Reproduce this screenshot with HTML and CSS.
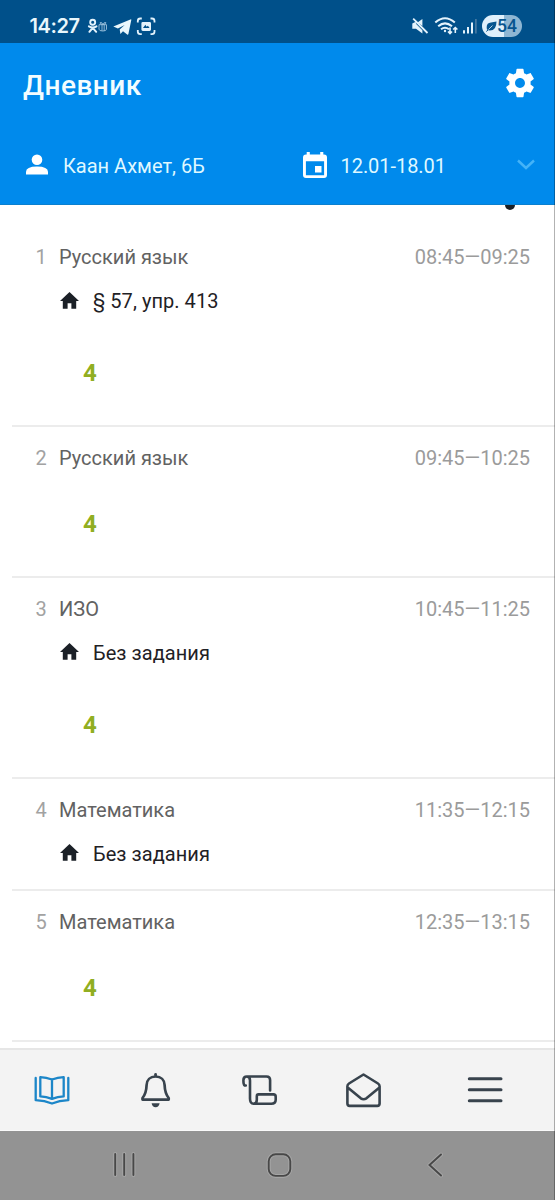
FILE: index.html
```html
<!DOCTYPE html>
<html lang="ru">
<head>
<meta charset="utf-8">
<title>Дневник</title>
<link rel="stylesheet" href="styles.css">
</head>
<body>
<div class="screen">
  <div class="status">
    <span class="clock">14:27</span>
    <svg class="notif" width="70" height="20" viewBox="87 16 70 20" fill="none" stroke="#e4f3fc">
      <circle cx="92.700" cy="22.200" r="2.500" stroke-width="1.900"/>
      <path d="M88.900 26.300q3.900 2.300 7.600 0M92.700 27.800l-3.300 4M92.700 27.800l3.500 4" stroke-width="2" stroke-linecap="round"/>
      <path d="M99 24.700h7.500v4.500q0 1.800-3.700 1.800t-3.800-1.800zM102 24.500v6.500M104.200 24.500v6.500M102.800 24.500q-3.500-.5-2.600-2 1.500-.8 2.800 2 1.300-2.800 2.800-2 .9 1.500-3 2" stroke-width=".9" stroke="#9bc1dc"/>
      <path d="M113.300 26.500 131 19.300q.4 0 .3.600l-2.900 14.200q-.4.900-1.200.4l-4.200-3.200-2.600 2.600-.7-4.300 5-4.700-6.800 3.700z" fill="#e9f7fc" stroke="none"/>
      <path d="M141.800 18.500h-1.500q-2.500 0-2.500 2.500v1.500M150.500 18.500h1.500q2.500 0 2.500 2.500v1.500M137.800 30v1.500q0 2.700 2.500 2.700h1.500M154.500 30v1.500q0 2.700-2.500 2.700h-1.500" stroke-width="1.800"/>
      <path fill-rule="evenodd" d="M142.800 21.900h6.800q1.400 0 1.400 1.400v6.200q0 1.400-1.400 1.400h-6.800q-1.400 0-1.400-1.400v-6.200q0-1.400 1.400-1.400zM143 28h6.600l-1.700-2.200-1.300 1-1.200-2z" fill="#e4f3fc" stroke="none"/>
    </svg>
    <svg class="signals" width="68" height="22" viewBox="410 15 68 22" fill="none" stroke="#e4f3fc">
      <path d="M412.300 23.600h3.800l6.300-4.600v6.900l-5.300-4-2.300.4zM412.300 23.600v5.200h3.700l6.400 4.700v-3.200l-6.700-6.700z" fill="#e4f3fc" stroke="none"/>
      <path d="M413.200 18.700 427.500 33" stroke-width="1.800"/>
      <path d="M435.300 22.600q9.700-8.700 19.500 0M438.200 26.300q6.800-5.900 13.800 0M441 29.300q4-3.200 8 0" stroke-width="2"/>
      <circle cx="445" cy="31" r="1.200" fill="#e4f3fc" stroke="none"/>
      <path d="M450 27.600v6M448 31.500l2 2 2-2M455.300 33v-5M453.200 29.500l2.100-2 2.100 2" stroke-width="1.600"/>
      <path d="M464 33.500v-3.300M468 33.500v-6.500M472 33.500v-11" stroke-width="2"/><path d="M475.900 33.500V19" stroke="#4f7fa5" stroke-width="1.500"/>
    </svg>
    <div class="battery">
      <svg width="11" height="11" viewBox="0 0 11 11"><path d="M1 8.500Q-.5 2 5 1.500L10.500.5Q10.500 9.500 4 9.600q-2 0-3-1.100z" fill="#07558f"/><path d="M2.500 8.500 6.500 4.500" stroke="#e0f0fb" stroke-width=".8"/><path d="M.3 10.500 2 9" stroke="#07558f"/></svg>
      <span>54</span>
    </div>
  </div>
  <header class="header">
    <div class="title-row">
      <h1>Дневник</h1>
      <svg class="gear" width="34" height="34" viewBox="0 0 24 24" fill="#fff"><path d="M19.430 12.980c.04-.32.07-.64.07-.98s-.03-.66-.07-.98l2.110-1.650c.19-.15.24-.42.12-.64l-2-3.460c-.12-.22-.39-.3-.61-.22l-2.490 1c-.52-.4-1.080-.73-1.690-.98l-.38-2.650C14.460 2.180 14.250 2 14 2h-4c-.25 0-.46.18-.49.42l-.38 2.650c-.61.25-1.170.59-1.690.98l-2.490-1c-.23-.09-.49 0-.61.22l-2 3.460c-.13.22-.07.49.12.64l2.110 1.650c-.04.32-.07.65-.07.98s.03.66.07.98l-2.110 1.650c-.19.15-.24.42-.12.64l2 3.460c.12.22.39.3.61.22l2.490-1c.52.4 1.080.73 1.690.98l.38 2.650c.03.24.24.42.49.42h4c.25 0 .46-.18.49-.42l.38-2.650c.61-.25 1.170-.59 1.690-.98l2.490 1c.23.09.49 0 .61-.22l2-3.460c.12-.22.07-.49-.12-.64l-2.110-1.650zM12 15.500c-1.930 0-3.500-1.570-3.500-3.500s1.570-3.500 3.500-3.500 3.500 1.570 3.500 3.500-1.570 3.500-3.500 3.500z"/></svg>
    </div>
    <div class="filters">
      <svg class="person" width="22" height="22" viewBox="0 0 22 22" fill="#fff"><circle cx="11" cy="5.700" r="5.300"/><path d="M0 20.500v-2.500q0-5.500 11-5.500t11 5.500v2.500z"/></svg>
      <span class="pupil">Каан Ахмет, 6Б</span>
      <svg class="calendar" width="24" height="27" viewBox="0 0 24 27"><path fill="#fff" fill-rule="evenodd" d="M3.700 0h3.100v2.500h10.400V0h3.100v2.500H21q3 0 3 3V23q0 3-3 3H3q-3 0-3-3V5.500q0-3 3-3h.7zM2.900 9.300V23.200h18.200V9.300z"/><path fill="#fff" d="M12 14h6.500v6.500H12z"/></svg>
      <span class="dates">12.01-18.01</span>
      <svg class="chevron" width="18" height="12" viewBox="0 0 18 12" fill="none" stroke="#44b3f8" stroke-width="2.400"><path d="m1 1.500 8 7.500 8-7.500"/></svg>
    </div>
  </header>
  <main class="lessons">
    <div class="day"><i class="day-dot"></i></div>
    <section class="lesson full">
      <div class="line"><span class="num">1</span><span class="subject">Русский язык</span><time>08:45—09:25</time></div>
      <div class="task"><svg width="20" height="18" viewBox="0 0 20 18"><path d="M10.500 0 1 8.900h2.800v7.900h4.800v-5.600h3.800v5.600h4.800V8.900H20z" fill="#1b2027"/></svg><span>§ 57, упр. 413</span></div>
      <div class="grade">4</div>
    </section>
    <section class="lesson graded">
      <div class="line"><span class="num">2</span><span class="subject">Русский язык</span><time>09:45—10:25</time></div>
      <div class="grade">4</div>
    </section>
    <section class="lesson full">
      <div class="line"><span class="num">3</span><span class="subject">ИЗО</span><time>10:45—11:25</time></div>
      <div class="task"><svg width="20" height="18" viewBox="0 0 20 18"><path d="M10.500 0 1 8.900h2.800v7.900h4.800v-5.600h3.800v5.600h4.800V8.900H20z" fill="#1b2027"/></svg><span>Без задания</span></div>
      <div class="grade">4</div>
    </section>
    <section class="lesson brief">
      <div class="line"><span class="num">4</span><span class="subject">Математика</span><time>11:35—12:15</time></div>
      <div class="task"><svg width="20" height="18" viewBox="0 0 20 18"><path d="M10.500 0 1 8.900h2.800v7.900h4.800v-5.600h3.800v5.600h4.800V8.900H20z" fill="#1b2027"/></svg><span>Без задания</span></div>
    </section>
    <section class="lesson graded">
      <div class="line"><span class="num">5</span><span class="subject">Математика</span><time>12:35—13:15</time></div>
      <div class="grade">4</div>
    </section>
  </main>
  <nav class="tabs">
    <svg width="104" height="36" viewBox="0 1072 104 36" fill="none" stroke="#1c86c8" stroke-width="2.300" stroke-linecap="round" stroke-linejoin="round"><path d="M40.300 1077.200q6 .3 11.700 2.300 5.700-2 11.700-2.300v19.200q-6 .4-11.700 2.400-5.700-2-11.700-2.400zM52 1079.500v19M35.700 1078v22.200q9 .5 16.300 3.300 7.300-2.800 16.300-3.300V1078"/></svg>
    <svg width="104" height="36" viewBox="104 1072 104 36" fill="none" stroke="#38434d" stroke-width="2.700" stroke-linecap="round" stroke-linejoin="round"><path d="M155.600 1076.500c-5.500 0-8.800 3.500-9 8.500-.2 6-.8 9-4.100 13v1.600h26.200V1098c-3.300-4-3.900-7-4.100-13-.2-5-3.500-8.500-9-8.500z"/><path d="M155.600 1074.300v1.500"/><path d="M151.600 1103.300h8q-.8 3.900-4 3.900t-4-3.900z" fill="#38434d" stroke="none"/></svg>
    <svg width="104" height="36" viewBox="208 1072 104 36" fill="none" stroke="#38434d" stroke-width="2.600" stroke-linecap="round" stroke-linejoin="round"><path d="M245.800 1085.500h-1.200q-1.200-.8-1.200-5.200 0-3.800 3.400-3.800h19.700q3.600 0 3.600 3.600v10.300M246.800 1076.500q3.200 0 3.200 4v18q0 5.200 3.500 5.200h17.700q4.500 0 4.500-4v-3q0-2.300-2.300-2.300h-14.900q-1.700 0-1.700 2v3.400q0 3.900-3.300 3.900"/></svg>
    <svg width="104" height="36" viewBox="312 1072 104 36" fill="none" stroke="#38434d" stroke-width="2.600" stroke-linecap="round" stroke-linejoin="round"><path d="m363.500 1074.500 14.500 9q1.600 1 1.600 2.800v17.300q0 2.300-2.300 2.300h-27.600q-2.300 0-2.300-2.300v-17.300q0-1.800 1.600-2.800zM348.300 1088l12.500 10.300q2.800 1.800 5.600 0l12.500-10.300"/></svg>
    <svg width="139" height="36" viewBox="416 1072 139 36" stroke="#38434d" stroke-width="3" stroke-linecap="round"><path d="M469.300 1078.700h31.700M469.300 1089.700h31.700M469.300 1100.700h31.700"/></svg>
  </nav>
  <div class="sysnav">
    <svg width="555" height="28" viewBox="0 1151 555 28" fill="none"><g stroke="#a5a5a5" stroke-width="4" stroke-linecap="round" stroke-linejoin="round"><path d="M115.200 1154v21M124.200 1154v21M133.400 1154v21M441 1154.500l-11.500 10.500 11.500 10.500"/><rect x="268.700" y="1154.300" width="21.600" height="21.600" rx="7"/></g><g stroke="#484848" stroke-width="1.900" stroke-linecap="round"><path d="M115.200 1154v21M124.200 1154v21M133.400 1154v21M441 1154.500l-11.500 10.500 11.500 10.500"/><rect x="268.700" y="1154.300" width="21.600" height="21.600" rx="7"/></g></svg>
  </div>
  <i class="edge"></i>
</div>
</body>
</html>
```
FILE: styles.css
```css
* { box-sizing: border-box; }
body { margin: 0; font-family: Roboto, "Noto Sans", sans-serif; }
.screen { position: relative; width: 555px; height: 1200px; display: flex; flex-direction: column; background: #fff; overflow: hidden; }
svg { display: block; flex: none; }
span, time, h1 { white-space: nowrap; }

.status { height: 43px; flex: none; display: flex; align-items: center; background: #00508a; padding: 9px 33px 0 29.500px; }
.clock { width: 57.500px; font: 600 20px/20px Inter, Roboto, sans-serif; letter-spacing: -.4px; color: #e9f7fc; }
.signals { margin-left: auto; }
.battery { width: 40px; height: 22px; margin-left: 4px; border-radius: 11px; display: flex; align-items: center; padding-left: 4px; background: linear-gradient(90deg, #e0f0fb 54%, #8eb6d3 54%); }
.battery span { font: 500 17.500px/22px Roboto, sans-serif; color: #07558f; margin-left: 0; }

.header { height: 162px; flex: none; background: #008aec; border-bottom: 1px solid #0b80cf; }
.title-row { height: 80px; padding: 1px 18px 0 23px; display: flex; align-items: center; justify-content: space-between; }
h1 { margin: 4px 0 0; font-size: 28px; line-height: 34px; font-weight: 500; letter-spacing: .5px; color: #f3fdff; }
.gear { margin-top: -1px; }
.filters { height: 84px; display: flex; align-items: center; padding: 0 20px 0 26px; font-size: 20px; line-height: 24px; color: #dff8ff; }
.pupil { width: 240px; margin: 2px 0 0 15px; }
.dates { margin: 2px 0 0 13.500px; letter-spacing: -.05px; }
.chevron { margin: -1px 0 0 auto; }

.lessons { flex: 1; min-height: 0; overflow: hidden; padding-left: 12px; }
.day { height: 21px; display: flex; justify-content: flex-end; padding-right: 40px; overflow: hidden; }
.day-dot { width: 10px; height: 10px; border-radius: 50%; background: #1b2027; margin-top: -5px; }
.lesson { display: flex; flex-direction: column; border-bottom: 2px solid #ececec; padding: 19px 25px 0 23.500px; }
.full { height: 201px; }
.graded { height: 150.500px; }
.brief { height: 112.500px; }
.line { display: flex; align-items: center; height: 24px; font-size: 20px; line-height: 24px; color: #626262; }
.num { width: 23.500px; color: #a2a2a2; }
time { margin-left: auto; color: #9b9b9b; }
.task { display: flex; align-items: center; height: 24px; margin: 20px 0 0 23.500px; gap: 14px; font-size: 20px; line-height: 24px; color: #1f2125; letter-spacing: .05px; }
.task svg { margin-top: -1px; }
.grade { margin: 46px 0 0 47.500px; font-size: 24px; line-height: 28px; font-weight: 700; color: #91ae22; }
.line + .grade { margin-top: 40px; }

.tabs { height: 83px; flex: none; display: flex; align-items: center; background: #f3f3f3; border-top: 2px solid #e6e6e6; border-bottom: 1px solid #fafafa; }
.sysnav { height: 69px; flex: none; display: flex; align-items: center; padding-bottom: 1px; background: #939393; }
.edge { position: absolute; right: 0; top: 0; width: 1px; height: 100%; background: rgba(0, 0, 0, .3); }
```
